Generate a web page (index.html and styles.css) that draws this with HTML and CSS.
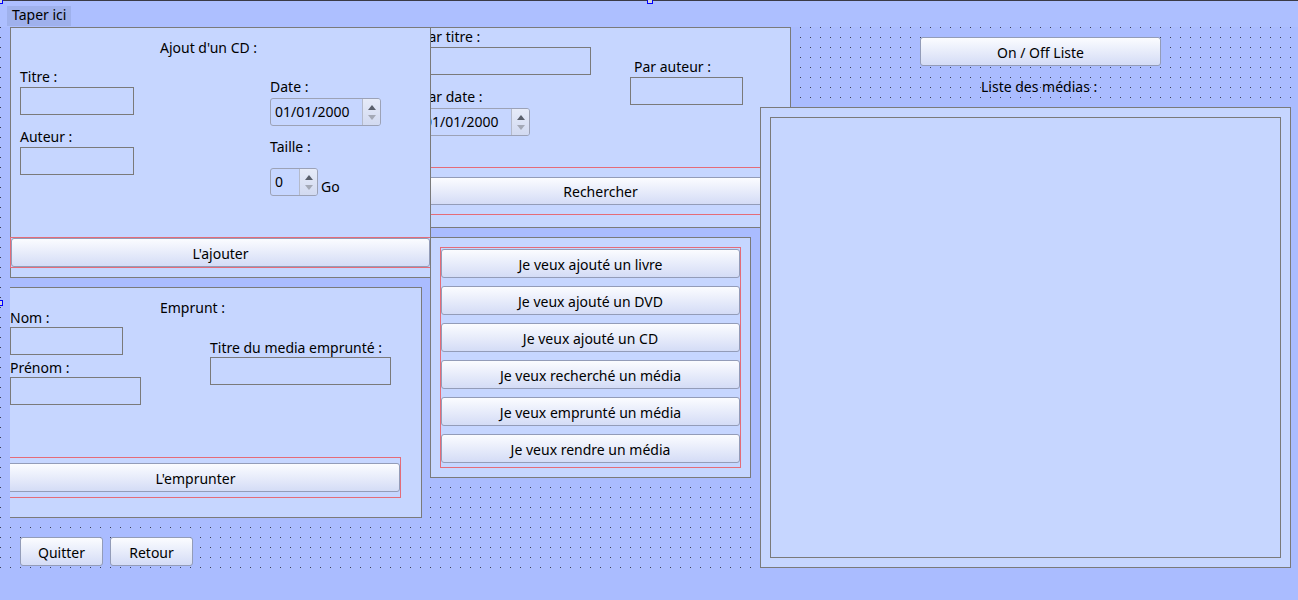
FILE: index.html
```html
<!DOCTYPE html>
<html>

<head>
  <title>Médiathèque</title>
  <link rel="stylesheet" href="styles.css">
</head>

<body>
  <div class="window">
    <span class="handle handle-top"></span>
    <span class="handle handle-corner"></span>
    <span class="handle handle-left"></span>

    <div class="menubar">
      <span class="menu-item">Taper ici</span>
    </div>

    <div class="canvas">
      <!-- Recherche -->
      <div class="panel panel-search">
        <div class="field search-title">
          <label>Par titre :</label>
          <div class="line-edit w-171"></div>
        </div>
        <div class="field search-author">
          <label>Par auteur :</label>
          <div class="line-edit w-113"></div>
        </div>
        <div class="field search-date">
          <label>Par date :</label>
          <div class="spin spin-date">
            <span class="spin-value">01/01/2000</span>
            <span class="spin-btns"><i class="up"></i><i class="down"></i></span>
          </div>
        </div>
        <div class="hot hot-search">
          <button class="btn">Rechercher</button>
        </div>
      </div>

      <!-- Ajout d'un CD -->
      <div class="panel panel-add">
        <span class="caption add-caption">Ajout d'un CD :</span>
        <div class="field add-title">
          <label>Titre :</label>
          <div class="line-edit w-114"></div>
        </div>
        <div class="field add-author">
          <label>Auteur :</label>
          <div class="line-edit w-114"></div>
        </div>
        <div class="field add-date">
          <label>Date :</label>
          <div class="spin spin-date">
            <span class="spin-value">01/01/2000</span>
            <span class="spin-btns"><i class="up"></i><i class="down"></i></span>
          </div>
        </div>
        <div class="field add-size">
          <label>Taille :</label>
          <div class="size-row">
            <div class="spin spin-size">
              <span class="spin-value">0</span>
              <span class="spin-btns"><i class="up"></i><i class="down"></i></span>
            </div>
            <span class="unit">Go</span>
          </div>
        </div>
        <div class="hot hot-add">
          <button class="btn">L'ajouter</button>
        </div>
      </div>

      <!-- Emprunt -->
      <div class="panel panel-borrow">
        <span class="caption borrow-caption">Emprunt :</span>
        <div class="field borrow-name">
          <label>Nom :</label>
          <div class="line-edit w-113"></div>
        </div>
        <div class="field borrow-first">
          <label>Prénom :</label>
          <div class="line-edit w-131"></div>
        </div>
        <div class="field borrow-media">
          <label>Titre du media emprunté :</label>
          <div class="line-edit w-181"></div>
        </div>
        <div class="hot hot-borrow">
          <button class="btn">L'emprunter</button>
        </div>
      </div>

      <!-- Actions -->
      <div class="panel panel-actions">
        <div class="hot action-list">
          <button class="btn">Je veux ajouté un livre</button>
          <button class="btn">Je veux ajouté un DVD</button>
          <button class="btn">Je veux ajouté un CD</button>
          <button class="btn">Je veux recherché un média</button>
          <button class="btn">Je veux emprunté un média</button>
          <button class="btn">Je veux rendre un média</button>
        </div>
      </div>

      <button class="btn btn-toggle">On / Off Liste</button>
      <span class="caption list-caption">Liste des médias :</span>

      <div class="panel panel-list">
        <div class="list-view"></div>
      </div>

      <div class="bottom-buttons">
        <button class="btn btn-small">Quitter</button>
        <button class="btn btn-small">Retour</button>
      </div>
    </div>
  </div>
</body>

</html>
```

FILE: styles.css
```css
:root {
  --canvas: #aabcff;
  --menubar: #adbfff;
  --panel: #c6d6ff;
  --frame: #7a7a7a;
  --hot: #e46c78;
  --dot: #3e4252;
}

* {
  box-sizing: border-box;
}

body {
  margin: 0;
  background-color: var(--canvas);
  font-family: "Noto Sans", sans-serif;
  font-size: 14px;
  line-height: 19px;
  color: #000;
  overflow: hidden;
}

.window {
  position: relative;
  width: 1298px;
  height: 600px;
  border-top: 1px solid #3a3a46;
}

/* selection handles of the designer */
.handle {
  position: absolute;
  width: 6px;
  height: 6px;
  background-color: #d4d4dc;
  border: 1px solid #0000ff;
  z-index: 5;
}

.handle-top {
  left: 647px;
  top: -3px;
}

.handle-corner {
  left: -3px;
  top: -3px;
}

.handle-left {
  left: -3px;
  top: 299px;
}

.menubar {
  height: 26px;
  background-color: var(--menubar);
  padding: 4px 0 0 7px;
}

.menu-item {
  display: inline-block;
  width: 64px;
  height: 20px;
  padding-left: 5px;
  line-height: 17px;
  background-color: #9fb1ec;
}

.canvas {
  position: relative;
  height: 541px;
  background-color: var(--canvas);
  background-image: conic-gradient(at 1px 1px, transparent 75%, var(--dot) 0);
  background-size: 10px 10px;
}

.panel {
  position: absolute;
  background-color: var(--panel);
  border: 1px solid var(--frame);
}

.panel-search {
  left: 410px;
  top: 0;
  width: 381px;
  height: 201px;
}

.panel-add {
  left: 10px;
  top: 0;
  width: 421px;
  height: 251px;
}

.panel-borrow {
  left: 10px;
  top: 260px;
  width: 412px;
  height: 231px;
  border-left: none;
  overflow: hidden;
}

.panel-actions {
  left: 430px;
  top: 210px;
  width: 321px;
  height: 241px;
}

.panel-list {
  left: 760px;
  top: 80px;
  width: 531px;
  height: 461px;
  padding: 9px;
}

.list-view {
  height: 100%;
  border: 1px solid var(--frame);
}

.caption {
  position: absolute;
  white-space: nowrap;
}

.add-caption {
  left: 149px;
  top: 10px;
}

.borrow-caption {
  left: 150px;
  top: 10px;
}

.list-caption {
  left: 981px;
  top: 50px;
}

/* label + widget */
.field {
  position: absolute;
  display: flex;
  flex-direction: column;
  gap: 1px;
}

.field label {
  white-space: nowrap;
}

.search-title { left: 9px; top: -1px; }
.search-author { left: 219px; top: 29px; }
.search-author label { padding-left: 4px; }
.search-date { left: 9px; top: 59px; gap: 2px; }
.search-date .spin { margin-left: -1px; }

.add-title { left: 9px; top: 39px; }
.add-author { left: 9px; top: 99px; }
.add-date { left: 259px; top: 49px; gap: 2px; }
.add-size { left: 259px; top: 109px; gap: 12px; }

.borrow-name { left: 0; top: 20px; gap: 0; }
.borrow-first { left: 0; top: 70px; gap: 0; }
.borrow-media { left: 200px; top: 50px; gap: 0; }

.line-edit {
  height: 28px;
  border: 1px solid var(--frame);
}

.w-113 { width: 113px; }
.w-114 { width: 114px; }
.w-131 { width: 131px; }
.w-171 { width: 171px; }
.w-181 { width: 181px; }

/* spin boxes */
.spin {
  display: flex;
  height: 28px;
  border: 1px solid #9ca2b6;
  border-radius: 3px;
  overflow: hidden;
}

.spin-date {
  width: 111px;
}

.spin-size {
  width: 48px;
}

.spin-value {
  flex: 1;
  padding: 3px 0 0 4px;
}

.spin-btns {
  width: 18px;
  display: flex;
  flex-direction: column;
  align-items: center;
  justify-content: center;
  gap: 5px;
  border-left: 1px solid #b4bacb;
  background: linear-gradient(#e6ebf8, #d2daf1);
}

.spin-btns i {
  width: 0;
  height: 0;
  border-left: 4px solid transparent;
  border-right: 4px solid transparent;
}

.spin-btns .up {
  border-bottom: 5px solid #5a606c;
}

.spin-btns .down {
  border-top: 5px solid #a4a9b6;
}

.size-row {
  display: flex;
  align-items: flex-end;
  gap: 3px;
}

/* buttons */
.btn {
  display: block;
  font-family: inherit;
  font-size: 14px;
  line-height: 19px;
  color: #000;
  padding: 1px 0 0;
  border: 1px solid #939cb8;
  border-radius: 3px;
  background: linear-gradient(#fbfcff, #d4dcf6);
  white-space: nowrap;
  text-align: center;
}

.hot {
  position: absolute;
  border: 1px solid var(--hot);
}

.hot .btn {
  width: 100%;
}

.hot-add {
  left: -1px;
  top: 209px;
  width: 421px;
  height: 31px;
}

.hot-add .btn {
  height: 29px;
}

.hot-search {
  left: 9px;
  top: 139px;
  width: 361px;
  height: 48px;
  padding: 9px 0;
}

.hot-search .btn {
  height: 28px;
}

.hot-borrow {
  left: -20px;
  top: 169px;
  width: 411px;
  height: 41px;
  padding: 5px 0;
}

.hot-borrow .btn {
  height: 29px;
}

.action-list {
  left: 9px;
  top: 9px;
  width: 301px;
  height: 221px;
  padding: 1px 0 4px;
  display: flex;
  flex-direction: column;
  gap: 8px;
}

.action-list .btn {
  height: 29px;
}

.btn-toggle {
  position: absolute;
  left: 920px;
  top: 10px;
  width: 241px;
  height: 29px;
}

.bottom-buttons {
  position: absolute;
  left: 20px;
  top: 510px;
  display: flex;
  gap: 7px;
}

.btn-small {
  width: 83px;
  height: 29px;
}
```
